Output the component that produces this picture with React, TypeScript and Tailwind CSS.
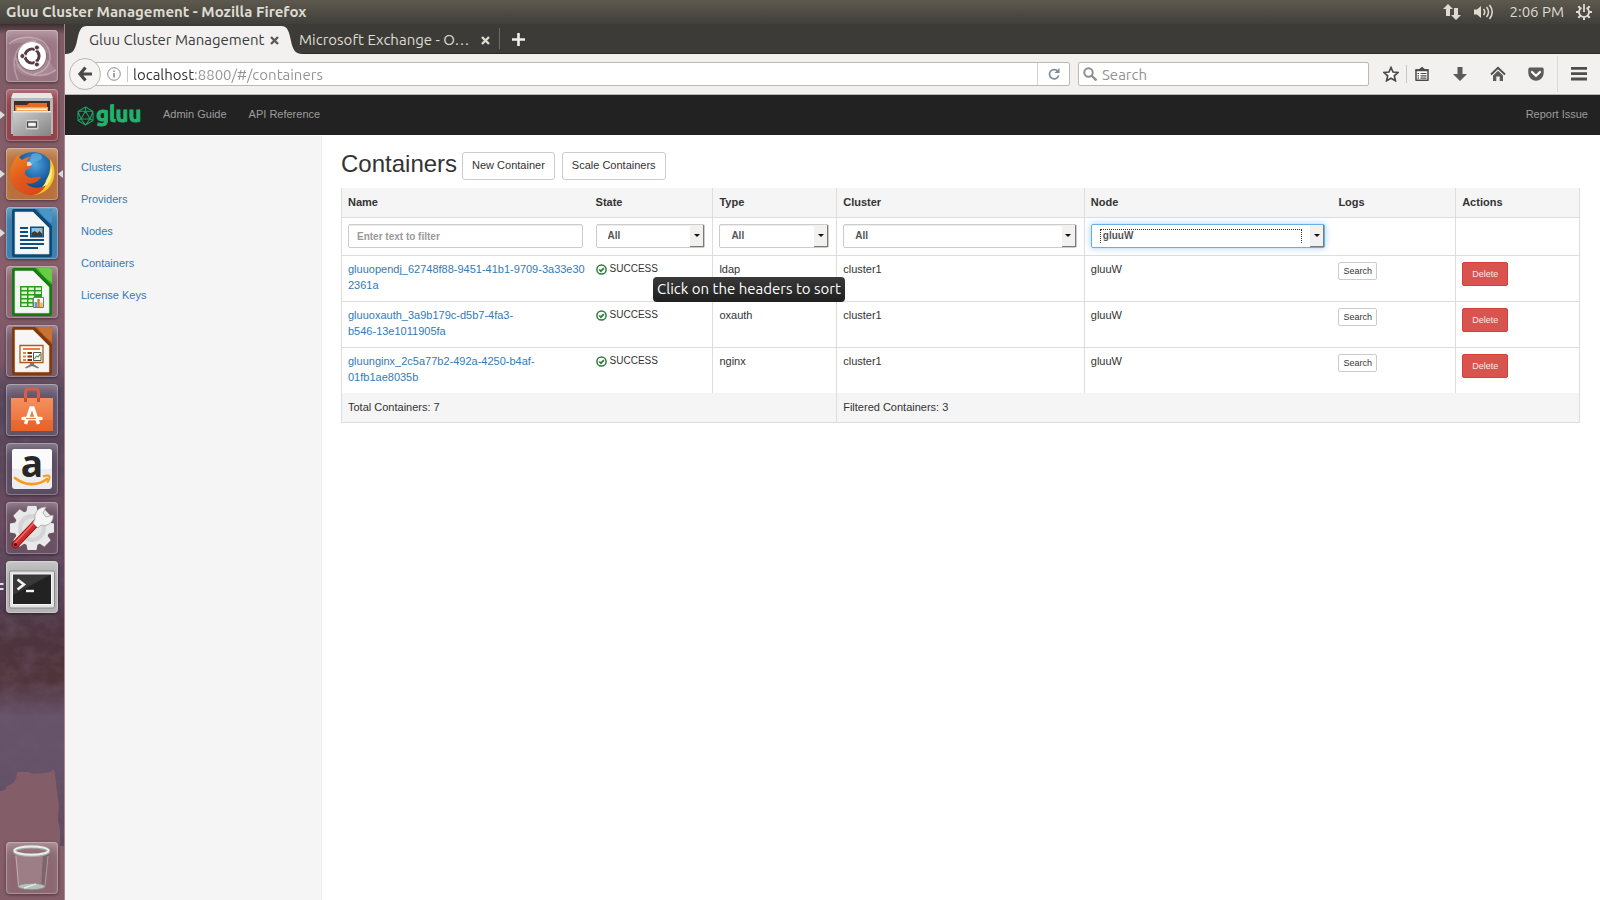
import { useState } from "react";
import type { ReactNode } from "react";

const UI_FONT = "font-['Ubuntu','Noto_Sans',sans-serif]";

/* ---------- Launcher drawings (52 x 52 grid) ---------- */

function DocumentIcon({ dark, mid, fold, children }: { dark: string; mid: string; fold: string; children: ReactNode }) {
  return (
    <>
      <path d="M8 2h36a2 2 0 0 1 2 2v44a2 2 0 0 1-2 2H8a2 2 0 0 1-2-2V4a2 2 0 0 1 2-2z" fill={dark} />
      <path d="M29 2h15a2 2 0 0 1 2 2v15z" fill={fold} />
      <path d="M32 2c3 6 8 11 14 14V4a2 2 0 0 0-2-2z" fill={mid} opacity=".55" />
      <path d="M9 5h18l16 16v26H9z" fill="#f6f6f6" stroke="#dcdcdc" strokeWidth=".6" />
      {children}
    </>
  );
}

const drawings: Record<string, ReactNode> = {
  dash: (
    <>
      <g fill="none" stroke="#fff" strokeOpacity=".28" strokeWidth="1.600">
        <path d="M3 14C11 5 36 3 43 20c4 14-4 22-15 24" />
        <path d="M12 50C4 32 8 12 30 11" />
        <path d="M50 40C36 50 12 46 10 28" />
      </g>
      <path d="M3 14C13 3 38 5 43 24L26 12zM8 34c4 14 24 16 42 6L42 30z" fill="#fff" opacity=".13" />
      <circle cx="26" cy="26.500" r="14.500" fill="#000" opacity=".2" />
      <circle cx="26" cy="26" r="14" fill="#fff" />
      <circle cx="26" cy="26" r="7" fill="none" stroke="#5a3c49" strokeWidth="3.200" />
      <g stroke="#fff" strokeWidth="1.300">
        <path d="M26 26H15.500M26 26 31.500 16.500M26 26 31.500 35.500" />
      </g>
      <circle cx="26" cy="26" r="5.400" fill="#fff" />
      <g fill="#5a3c49" stroke="#fff" strokeWidth=".9">
        <circle cx="16.400" cy="26" r="2.500" />
        <circle cx="30.900" cy="17.500" r="2.500" />
        <circle cx="30.900" cy="34.500" r="2.500" />
      </g>
    </>
  ),
  files: (
    <>
      <path d="M7 4h38l2 7v34H5V11z" fill="#b9b9b9" />
      <path d="M7 4h38l2 5H5z" fill="#e6e6e6" />
      <rect x="8" y="12" width="36" height="13" fill="#3a2f2b" />
      <path d="M9 16h12l2-2h18v8H9z" fill="#e56c1d" />
      <path d="M10 18h32v5H10z" fill="#f6a35a" />
      <path d="M11 19.500h30v1.500H11z" fill="#fff3e4" />
      <path d="M7 22h38v25H7z" fill="url(#steel)" />
      <path d="M7 22h38v1.500H7z" fill="#e9e9e9" />
      <rect x="19.500" y="30.500" width="13" height="10" rx="2" fill="#d9d9d9" stroke="#b4b4b4" />
      <rect x="21.500" y="33" width="9" height="5" fill="#f4f4f4" stroke="#444" strokeWidth="1.400" />
    </>
  ),
  firefox: (
    <>
      <circle cx="27" cy="25" r="21" fill="url(#globe)" />
      <path d="M26 6c6-2 11 1 10 4s-6 2-8 5-4 2-5-1z" fill="#6db9ea" opacity=".6" />
      <path d="M44 11c5 6 6 16 2 24-4 8-12 12-20 12 8-4 13-8 14-15 3-4 5-10 4-21z" fill="#f7c52c" />
      <path d="M45 18c2 6 1 14-4 19s-9 8-14 9c7-5 13-9 15-17 2-3 3-7 3-11z" fill="#fdf08a" />
      <path d="M8 13c1-3 3-5 5-6 0 2 1 4 3 5 3-2 6-3 9-3-2 1-4 3-4 5 0 2 3 2 5 3-1 3-4 4-6 5-2 2-1 5 2 7 4 2 8-1 13 0-3 5-9 8-15 6 5 6 14 6 20 2-4 8-11 11-17 10C12 46 4 37 4 27c0-6 2-10 4-14z" fill="url(#fox)" />
      <path d="M21 14c2-1 4 0 5 3-2 1-4 1-5 1z" fill="#fbd9bd" />
    </>
  ),
  writer: (
    <DocumentIcon dark="#0b4a78" mid="#5da7d6" fold="#2f7fb4">
      <g fill="#0f4f80">
        <path d="M14 20h8v2h-8zM14 24h8v2h-8zM14 28h8v2h-8zM14 32h24v2H14zM14 36h24v2H14zM14 40h18v2H14z" />
        <path d="M24 19.500h14v11H24z" />
      </g>
      <path d="M25.500 21h11v8h-11z" fill="#86c5ea" />
      <path d="M25.500 29v-3l3-2 3 2 2-2 3 3v2z" fill="#3d3d38" />
      <circle cx="34.500" cy="22.500" r="1.300" fill="#f4a03a" />
    </DocumentIcon>
  ),
  calc: (
    <DocumentIcon dark="#187b12" mid="#8ce05a" fold="#3fb52c">
      <path d="M14 20h22v21H14z" fill="#2f9a22" />
      <path
        d="M15.500 21.500h5.500v2.500h-5.500zM22.500 21.500h5.500v2.500h-5.500zM29.500 21.500H35v2.500h-5.500zM15.500 25.500h5.500V28h-5.500zM22.500 25.500h5.500V28h-5.500zM29.500 25.500H35V28h-5.500zM15.500 29.500h5.500V32h-5.500zM22.500 29.500h5.500V32h-5.500zM15.500 33.500h5.500V36h-5.500zM22.500 33.500h4V36h-4zM15.500 37.500h5.500V40h-5.500zM22.500 37.500h4V40h-4z"
        fill="#dff6d3"
      />
      <path d="M27.500 31.500h10v10h-10z" fill="#fff" stroke="#7a7a7a" />
      <path d="M28.500 36h2.500v5h-2.500z" fill="#4aa0e0" />
      <path d="M31.300 33h2.500v8h-2.500z" fill="#e8742a" />
      <path d="M34.200 36.500h2.500V41h-2.500z" fill="#f1b73c" />
    </DocumentIcon>
  ),
  impress: (
    <DocumentIcon dark="#823a08" mid="#d6803b" fold="#b8622a">
      <path d="M14 20.500h23v17H14z" fill="#fff" stroke="#b5561c" strokeWidth="1.300" />
      <path d="M17 23h17v2H17z" fill="#e08440" />
      <path d="M17 27h3v2h-3zM17 30.500h3v2h-3zM17 34h3v2h-3z" fill="#e08440" />
      <path d="M21.500 27H26v2h-4.500zM21.500 30.500H26v2h-4.500zM21.500 34H26v2h-4.500z" fill="#7c3410" />
      <path d="M27.500 27.500h7.500v8h-7.500z" fill="#fff" stroke="#555" />
      <path d="m28.500 34 2-3 1.500 1 2.500-3" stroke="#3fa435" strokeWidth="1.200" fill="none" />
      <path d="M24 38h4v1.500l5 3-1 1-6-2.500-6 2.500-1-1 5-3z" fill="#777" />
    </DocumentIcon>
  ),
  software: (
    <>
      <path d="M19.500 18V8q0-3 3-3h7q3 0 3 3v10" fill="none" stroke="#d0604a" strokeWidth="3" />
      <path d="M5 14h42v33H5z" fill="url(#bag)" />
      <path d="M5 36h42v11H5z" fill="#d9531a" opacity=".3" />
      <path d="M18 14h3v4h-3zM31 14h3v4h-3z" fill="#c4502f" />
      <g fill="none" stroke="#fff" strokeWidth="3.400">
        <path d="m19.500 40 5.500-16h2l5.500 16" />
        <path d="M17 34.500h18" strokeLinecap="round" />
      </g>
      <path d="M20 34.500h10" stroke="#f07a45" strokeWidth="1" />
    </>
  ),
  amazon: (
    <>
      <rect x="6" y="6" width="40" height="40" rx="3" fill="#ededed" />
      <rect x="6" y="6" width="40" height="20" rx="3" fill="#fafafa" />
      <text x="26" y="34" textAnchor="middle" fontFamily="Open Sans, sans-serif" fontWeight="700" fontSize="37" fill="#262626">a</text>
      <path d="M9 35c10 8 23 8 32 1" fill="none" stroke="#f79a1e" strokeWidth="2.600" strokeLinecap="round" />
      <path d="M37 33.500c3-1 6-1 6.500 0s-.5 4-2.500 6" fill="none" stroke="#f79a1e" strokeWidth="2" />
    </>
  ),
  settings: (
    <>
      <g fill="#e9e9e9">
        <circle cx="26" cy="26" r="17.500" />
        {[0, 45, 90, 135, 180, 225, 270, 315].map((a) => (
          <path key={a} d="M21.500 4h9l1.500 8H20z" transform={`rotate(${a} 26 26)`} />
        ))}
      </g>
      <circle cx="26" cy="26" r="14" fill="#d4d4d4" />
      <circle cx="26" cy="26" r="10" fill="#e2e2e2" />
      <path d="M9.500 42.500 32 19" stroke="#8d1414" strokeWidth="7.500" strokeLinecap="round" />
      <path d="M9.500 42.500 32 18.500" stroke="#d42c2c" strokeWidth="5.500" strokeLinecap="round" />
      <path d="M9 41 30 18.500" stroke="#f06a62" strokeWidth="1.500" strokeLinecap="round" />
      <circle cx="9.500" cy="42.500" r="1.600" fill="#5c0a0a" />
      <path d="M29 17c-1-7 4-12 11-12l-3 6 3 4 7-2c1 7-5 12-12 10l-3 3-5-5z" fill="#f5f5f5" stroke="#a5a5a5" strokeWidth=".8" />
    </>
  ),
  terminal: (
    <>
      <rect x="3.500" y="10" width="45" height="37" rx="1.500" fill="#e2e2e2" stroke="#8a8a8a" />
      <rect x="6" y="12.500" width="40" height="31.500" fill="#f5f5f5" />
      <rect x="7" y="13.500" width="38" height="29.500" fill="#222" />
      <path d="M7 13.500h38L7 34z" fill="#fff" opacity=".1" />
      <path d="m11.500 18.500 6.500 5-6.500 5" fill="none" stroke="#f2f2f2" strokeWidth="2.600" />
      <path d="M20 30h8" stroke="#f2f2f2" strokeWidth="2.400" />
    </>
  ),
  trash: (
    <>
      <path d="M9 12h34l-4 33H12z" fill="#fff" opacity=".14" />
      <path d="M37 12h6l-4 33h-4z" fill="#3a2a30" opacity=".3" />
      <path d="M10 14 12.500 44M42 14 39 44" stroke="#fff" strokeOpacity=".35" strokeWidth="1" />
      <ellipse cx="25.500" cy="44.500" rx="13.500" ry="3.200" fill="#b9c0bb" stroke="#7f8783" strokeWidth=".8" />
      <path d="M18 46 30 42" stroke="#dfe5e0" strokeWidth="1.500" />
      <ellipse cx="25.500" cy="9" rx="17" ry="4.300" fill="none" stroke="#a6aca8" strokeWidth="3.600" />
      <ellipse cx="25.500" cy="8.600" rx="17" ry="4.200" fill="none" stroke="#eceeec" strokeWidth="2" />
    </>
  ),
};

type LauncherItem = { id: string; label: string; tile: string; mark?: "one" | "two"; focused?: boolean };

const launcher: LauncherItem[] = [
  { id: "dash", label: "Search your computer", tile: "bg-[#9b7784]" },
  { id: "files", label: "Files", tile: "bg-[#93404a]", mark: "one" },
  { id: "firefox", label: "Firefox Web Browser", tile: "bg-[#b8713c]", mark: "one", focused: true },
  { id: "writer", label: "LibreOffice Writer", tile: "bg-[#3c7fab]", mark: "one" },
  { id: "calc", label: "LibreOffice Calc", tile: "bg-[#8a6873]" },
  { id: "impress", label: "LibreOffice Impress", tile: "bg-[#765a6a]" },
  { id: "software", label: "Ubuntu Software", tile: "bg-[#63536a]" },
  { id: "amazon", label: "Amazon", tile: "bg-[#5b4c62]" },
  { id: "settings", label: "System Settings", tile: "bg-[#695063]" },
  { id: "terminal", label: "Terminal", tile: "bg-[#b3b3b3]", mark: "two" },
];

function Tile({ item }: { item: LauncherItem }) {
  return (
    <div className="relative flex justify-center">
      {item.mark === "one" && (
        <svg className="absolute top-5 left-0" width="5" height="12" viewBox="0 0 5 12" aria-hidden="true">
          <path d="M0 2v8l5-4z" fill="#ddd" />
        </svg>
      )}
      {item.mark === "two" && (
        <svg className="absolute top-5 left-0" width="5" height="12" viewBox="0 0 5 12" aria-hidden="true">
          <path d="M0 2h3l1 1-1 1H0zM0 7h3l1 1-1 1H0z" fill="#ddd" />
        </svg>
      )}
      {item.focused && (
        <svg className="absolute top-5 right-0" width="5" height="12" viewBox="0 0 5 12" aria-hidden="true">
          <path d="M5 2v8L0 6z" fill="#ddd" />
        </svg>
      )}
      <button
        type="button"
        aria-label={item.label}
        className={`h-[52px] w-[52px] rounded-[4px] shadow-[0_1px_3px_rgba(0,0,0,0.45),inset_0_0_0_1px_rgba(255,255,255,0.28),inset_0_10px_12px_-6px_rgba(255,255,255,0.35)] ${item.tile}`}
      >
        <svg width="52" height="52" viewBox="0 0 52 52" className="overflow-visible" aria-hidden="true">
          {drawings[item.id]}
        </svg>
      </button>
    </div>
  );
}

function Launcher() {
  return (
    <aside className="relative w-[65px] shrink-0 border-r border-[#a9828d]">
      <svg className="absolute inset-0 h-full w-full" viewBox="0 0 64 876" preserveAspectRatio="none" aria-hidden="true">
        <defs>
          <linearGradient id="wall" x1="0" y1="0" x2="0" y2="1">
            <stop offset="0" stopColor="#3d2c31" />
            <stop offset=".012" stopColor="#7f5c66" />
            <stop offset=".3" stopColor="#885e6b" />
            <stop offset=".385" stopColor="#7a5667" />
            <stop offset=".42" stopColor="#57475d" />
            <stop offset=".5" stopColor="#5a465a" />
            <stop offset=".56" stopColor="#6b4a5f" />
            <stop offset=".64" stopColor="#54425a" />
            <stop offset=".7" stopColor="#4d343d" />
            <stop offset=".75" stopColor="#50343b" />
            <stop offset=".79" stopColor="#66536a" />
            <stop offset=".85" stopColor="#645269" />
            <stop offset="1" stopColor="#5b4450" />
          </linearGradient>
          <linearGradient id="steel" x1="0" y1="0" x2="1" y2="1">
            <stop offset="0" stopColor="#cfcfcf" />
            <stop offset="1" stopColor="#838383" />
          </linearGradient>
          <radialGradient id="globe" cx=".55" cy=".3" r=".8">
            <stop offset="0" stopColor="#4aa3e0" />
            <stop offset=".5" stopColor="#1a5b9e" />
            <stop offset="1" stopColor="#10305e" />
          </radialGradient>
          <linearGradient id="fox" x1="0" y1="0" x2=".6" y2="1">
            <stop offset="0" stopColor="#f08a24" />
            <stop offset=".5" stopColor="#e35d1c" />
            <stop offset="1" stopColor="#d8491c" />
          </linearGradient>
          <linearGradient id="bag" x1="0" y1="0" x2="0" y2="1">
            <stop offset="0" stopColor="#f4905d" />
            <stop offset="1" stopColor="#ec6a32" />
          </linearGradient>
          <filter id="rock" x="0" y="0" width="1" height="1">
            <feTurbulence type="fractalNoise" baseFrequency=".05 .07" numOctaves="4" seed="8" />
            <feColorMatrix values="0 0 0 0 .16  0 0 0 0 .1  0 0 0 0 .14  1.8 0 0 0 -.7" />
          </filter>
        </defs>
        <rect width="64" height="876" fill="url(#wall)" />
        <rect y="350" width="64" height="500" filter="url(#rock)" opacity=".5" />
        <path d="M0 767 5 766 7 762 12 760 16 755 17 748 28 748 34 750 44 749 50 748 54 745 56 757 57 768 59 780 58 796 60 806 60 822 64 822V876H0z" fill="#835d67" />
      </svg>
      <nav aria-label="Launcher" className="relative flex h-full flex-col gap-[7px] py-[6px] pr-[1px]">
        {launcher.map((item) => (
          <Tile key={item.id} item={item} />
        ))}
        <div className="mt-auto">
          <Tile item={{ id: "trash", label: "Trash", tile: "bg-[#8d6873]" }} />
        </div>
      </nav>
    </aside>
  );
}

/* ---------- System bar ---------- */

function SystemBar() {
  return (
    <header className={`flex h-6 shrink-0 items-center bg-linear-to-b from-[#5d594f] to-[#403f3a] pr-2 pl-[6px] text-[15px] text-[#dfdbd2] ${UI_FONT}`}>
      <h1 className="font-bold">Gluu Cluster Management - Mozilla Firefox</h1>
      <div className="ml-auto flex items-center">
        <button type="button" aria-label="Network" className="mr-[13px]">
          <svg width="18" height="18" viewBox="0 0 18 18" fill="#dfdbd2" aria-hidden="true">
            <path d="M5 1 0 6h3v7h4V6h3zM13 17l5-5h-3V5h-4v7H8z" />
          </svg>
        </button>
        <button type="button" aria-label="Sound" className="mr-[15px]">
          <svg width="20" height="18" viewBox="0 0 20 18" fill="none" stroke="#dfdbd2" strokeWidth="1.500" aria-hidden="true">
            <path d="M0 6.500h3L7 3v12l-4-3.500H0z" fill="#dfdbd2" stroke="none" />
            <path d="M9.500 6q2.500 3 0 6M12.500 4q4 5 0 10M15.500 2q5.500 7 0 14" />
          </svg>
        </button>
        <time className="mr-3">2:06 PM</time>
        <button type="button" aria-label="Session">
          <svg width="16" height="16" viewBox="0 0 16 16" fill="none" stroke="#dfdbd2" aria-hidden="true">
            <path d="M5.500 3.700a5 5 0 1 0 5 0" strokeWidth="1.800" />
            <path d="M8 0v8" strokeWidth="1.800" />
            <path d="M2.300 2.300 4.300 4.300M13.700 2.300l-2 2M0 8h3M13 8h3M2.300 13.700l2-2M13.700 13.700l-2-2M8 13v3" strokeWidth="2" />
          </svg>
        </button>
      </div>
    </header>
  );
}

/* ---------- Browser chrome ---------- */

function CloseMark({ color }: { color: string }) {
  return (
    <svg width="9" height="9" viewBox="0 0 9 9" stroke={color} strokeWidth="2.400" aria-hidden="true">
      <path d="m1 1 7 7M8 1 1 8" />
    </svg>
  );
}

function TabStrip() {
  return (
    <div className={`flex h-[30px] shrink-0 items-end border-b border-[#2b2a27] bg-[#3c3b37] text-[15px] ${UI_FONT}`}>
      <div className="-mb-px flex h-7">
        <svg width="22" height="28" viewBox="0 0 22 28" fill="#f2f1f0" aria-hidden="true">
          <path d="M0 28c8 0 10-4 12-13S15 0 22 0v28z" />
        </svg>
        <div className="flex w-[194px] items-center justify-between bg-[#f2f1f0] px-[2px] text-[#3c3c3c]">
          <span className="whitespace-nowrap">Gluu Cluster Management</span>
          <button type="button" aria-label="Close Gluu Cluster Management">
            <CloseMark color="#5a5a5a" />
          </button>
        </div>
        <svg width="22" height="28" viewBox="0 0 22 28" fill="#f2f1f0" aria-hidden="true">
          <path d="M22 28c-8 0-10-4-12-13S7 0 0 0v28z" />
        </svg>
      </div>
      <div className="-mb-px -ml-1 flex h-7 w-[200px] items-center text-[#dfdbd2]">
        <span className="w-[170px] whitespace-nowrap">Microsoft Exchange - O…</span>
        <button type="button" aria-label="Close Microsoft Exchange" className="ml-3">
          <CloseMark color="#dfdbd2" />
        </button>
      </div>
      <div className="mb-1 h-[21px] w-px bg-[#6c6b67]" />
      <button type="button" aria-label="New tab" className="mb-[7px] ml-3">
        <svg width="13" height="13" viewBox="0 0 13 13" stroke="#f0efec" strokeWidth="2.600" aria-hidden="true">
          <path d="M6.500 0v13M0 6.500h13" />
        </svg>
      </button>
    </div>
  );
}

function ToolButton({ label, width, children }: { label: string; width: string; children: ReactNode }) {
  return (
    <button type="button" aria-label={label} className={`flex h-8 shrink-0 items-center justify-center ${width}`}>
      <svg width="16" height="16" viewBox="0 0 16 16" aria-hidden="true">
        {children}
      </svg>
    </button>
  );
}

function Toolbar() {
  const [url, setUrl] = useState("localhost:8800/#/containers");
  return (
    <div className={`flex h-[41px] shrink-0 items-center border-b border-[#b6b5b2] bg-[#f2f1f0] pl-1 text-[15px] ${UI_FONT}`}>
      <button type="button" aria-label="Back" className="z-10 flex h-8 w-8 shrink-0 items-center justify-center rounded-full border border-[#b9b6b1] bg-[#f5f4f3]">
        <svg width="16" height="16" viewBox="0 0 16 16" fill="none" stroke="#4a4a4a" strokeWidth="3.200" aria-hidden="true">
          <path d="M8.500 1.500 3 8l5.500 6.500M3 8h12" />
        </svg>
      </button>
      <div className="-ml-4 flex h-6 min-w-0 flex-1 items-center rounded-r-[2px] border border-[#bab8b4] bg-white pl-[21px]">
        <svg width="14" height="14" viewBox="0 0 14 14" fill="none" stroke="#8a8a8a" className="shrink-0" aria-hidden="true">
          <circle cx="7" cy="7" r="6.300" />
          <path d="M7 6v4.500M7 3.400V5" strokeWidth="1.600" />
        </svg>
        <span className="mr-[5px] ml-[6px] h-4 w-px bg-[#c8c8c8]" />
        <input
          aria-label="Address"
          value={url}
          onChange={(e) => setUrl(e.target.value)}
          className="min-w-0 flex-1 bg-[linear-gradient(90deg,#2e2e2e_62px,#929292_62px)] bg-clip-text pt-[2px] text-transparent outline-none"
        />
        <button type="button" aria-label="Reload" className="flex h-full w-8 items-center justify-center border-l border-[#d5d3d0]">
          <svg width="12" height="12" viewBox="0 0 13 13" fill="none" stroke="#7d8ea0" strokeWidth="1.800" aria-hidden="true">
            <path d="M10.500 3.500A5 5 0 1 0 11.500 8" />
            <path d="M12.500 0v5.500H7z" fill="#7d8ea0" stroke="none" />
          </svg>
        </button>
      </div>
      <div className="ml-2 flex h-6 w-[291px] shrink-0 items-center rounded-[2px] border border-[#bab8b4] bg-white pl-1">
        <svg width="14" height="14" viewBox="0 0 14 14" fill="none" stroke="#8f8f8f" strokeWidth="2" aria-hidden="true">
          <circle cx="5.500" cy="5.500" r="4.200" />
          <path d="m8.500 8.500 5 5" strokeWidth="2.400" />
        </svg>
        <input aria-label="Search the web" placeholder="Search" className="ml-[5px] min-w-0 flex-1 pt-[2px] outline-none placeholder:text-[#929292]" />
      </div>
      <div className="ml-[7px] flex items-center">
        <ToolButton label="Bookmark this page" width="w-[30px]">
          <path d="m8 1.500 2 4.500 5 .5-3.700 3.300 1.100 4.900L8 12.200l-4.400 2.500 1.100-4.900L1 6.500 6 6z" fill="#fff" stroke="#4a4a4a" strokeWidth="1.700" />
        </ToolButton>
        <span className="h-[18px] w-px bg-[#c9c7c4]" />
        <ToolButton label="Bookmarks" width="w-[30px] mr-1">
          <path d="M2 4h12v10.300H2z" fill="#fff" stroke="#4a4a4a" strokeWidth="1.500" strokeLinejoin="round" />
          <path d="M1.500 3.200h3.500L8 .8l3 2.400h3.500v2h-13z" fill="#4a4a4a" />
          <path d="M6.500 7.500h6M6.500 9.800h6M6.500 12.100h6" stroke="#4a4a4a" strokeWidth="1.200" />
          <path d="M3.500 7.500H5M3.500 9.800H5M3.500 12.100H5" stroke="#4a4a4a" strokeWidth="1.200" />
        </ToolButton>
        <ToolButton label="Downloads" width="w-[38px]">
          <path d="M5.500 1h5v7h4.500L8 15 1 8h4.500z" fill="#5b5b5b" />
        </ToolButton>
        <ToolButton label="Home" width="w-[38px]">
          <path d="M1 8.500 8 1.800l7 6.700" fill="none" stroke="#4d4d4d" strokeWidth="1.900" />
          <path d="M3 9.500l5-4.700 5 4.700V15H9.700v-4.500H6.300V15H3z" fill="#5b5b5b" />
        </ToolButton>
        <ToolButton label="Save to Pocket" width="w-[38px]">
          <path d="M1.800 1.500h12.400a1.500 1.500 0 0 1 1.500 1.500v4a7.700 7.700 0 0 1-15.400 0V3a1.500 1.500 0 0 1 1.500-1.500z" fill="#5b5b5b" />
          <path d="m4 6 4 3.800L12 6" fill="none" stroke="#fff" strokeWidth="2.200" strokeLinecap="round" />
        </ToolButton>
        <span className="ml-[2px] h-9 w-px bg-[#dbd9d6]" />
        <ToolButton label="Menu" width="w-[42px]">
          <path d="M0 1h16v2.800H0zM0 6.300h16v2.800H0zM0 11.600h16v2.800H0z" fill="#4d4d4d" />
        </ToolButton>
      </div>
    </div>
  );
}

/* ---------- Page ---------- */

function Navbar() {
  return (
    <header className="flex h-10 shrink-0 items-center bg-[#222] px-3 pb-[2px] text-[11px] text-[#9d9d9d]">
      <a href="#/" className="flex h-full w-16 items-center text-[#1fb36b]">
        <svg width="17" height="20" viewBox="0 0 17 20" fill="none" stroke="#1a9d61" strokeWidth="1.100" strokeLinejoin="round" className="mt-[3px] shrink-0" aria-hidden="true">
          <path d="M8.500 1 16 5.500v9L8.500 19 1 14.500v-9zM8.500 5 13 13H4zM8.500 1v4M1 5.500l7.500-.5 7.500.5M1 5.500 4 13l-3 1.500M16 5.500 13 13l3 1.500M4 13l4.500 6 4.500-6" />
        </svg>
        <span className={`ml-[2px] pb-[1px] text-[22px] leading-none font-bold [-webkit-text-stroke:1px_#1fb36b] ${UI_FONT}`}>gluu</span>
      </a>
      <nav className="ml-[22px] flex gap-[22px]">
        <a href="#/guide">Admin Guide</a>
        <a href="#/api">API Reference</a>
      </nav>
      <a href="#/issue" className="ml-auto">Report Issue</a>
    </header>
  );
}

const sections = ["Clusters", "Providers", "Nodes", "Containers", "License Keys"];

function FilterSelect({ label, options, initial, dotted }: { label: string; options: string[]; initial: string; dotted?: boolean }) {
  const [value, setValue] = useState(initial);
  return (
    <div className="relative">
      <select
        aria-label={label}
        value={value}
        onChange={(e) => setValue(e.target.value)}
        className={`block h-6 w-full appearance-none rounded-[2px] border bg-white pt-px pl-[11px] text-[10px] font-bold text-[#555] outline-none ${
          dotted ? "border-[#66afe9] shadow-[0_0_7px_rgba(102,175,233,0.6)]" : "border-[#ccc] shadow-[inset_0_1px_1px_rgba(0,0,0,0.075)]"
        }`}
      >
        {options.map((o) => (
          <option key={o}>{o}</option>
        ))}
      </select>
      {dotted && <span className="pointer-events-none absolute inset-y-[5px] right-[23px] left-[9px] border-x border-t border-dotted border-[#333]" />}
      <span className="pointer-events-none absolute inset-y-px right-px flex w-[14px] items-center justify-center border-r border-b border-[#7d7b78] bg-[#f2f1f0]">
        <svg width="6" height="3" viewBox="0 0 6 3" aria-hidden="true">
          <path d="M0 0h6L3 3z" fill="#111" />
        </svg>
      </span>
    </div>
  );
}

type Row = { name: [string, string]; type: string };

const rows: Row[] = [
  { name: ["gluuopendj_62748f88-9451-41b1-9709-3a33e30", "2361a"], type: "ldap" },
  { name: ["gluuoxauth_3a9b179c-d5b7-4fa3-", "b546-13e1011905fa"], type: "oxauth" },
  { name: ["gluunginx_2c5a77b2-492a-4250-b4af-", "01fb1ae8035b"], type: "nginx" },
];

const HEAD = "h-[30px] border-b border-[#ddd] bg-[#f5f5f5] pr-[7px] pb-[2px] pl-[6px] text-left";
const FILTER = "h-[38px] border-b border-[#ddd] pr-[7px] pb-[2px] pl-[6px]";
const CELL = "h-[46px] border-b border-[#ddd] pr-[7px] pl-[6px] pt-[5px] align-top group-last:h-[45px] group-last:border-b-0";
const RIGHT = "border-r border-[#ddd]";

function ContainersTable() {
  return (
    <table className="mt-2 w-full table-fixed border-separate border-spacing-0 border-l border-[#ddd] leading-4">
      <colgroup>
        <col className="w-[20%]" />
        <col className="w-[10%]" />
        <col className="w-[10%]" />
        <col className="w-[20%]" />
        <col className="w-[20%]" />
        <col className="w-[10%]" />
        <col className="w-[10%]" />
      </colgroup>
      <thead>
        <tr>
          <th className={HEAD}>Name</th>
          <th className={`${HEAD} ${RIGHT}`}>State</th>
          <th className={`${HEAD} ${RIGHT}`}>Type</th>
          <th className={`${HEAD} ${RIGHT}`}>Cluster</th>
          <th className={HEAD}>Node</th>
          <th className={`${HEAD} ${RIGHT}`}>Logs</th>
          <th className={`${HEAD} ${RIGHT}`}>Actions</th>
        </tr>
        <tr>
          <td className={FILTER}>
            <input
              aria-label="Filter by name"
              placeholder="Enter text to filter"
              className="block h-6 w-full rounded-[2px] border border-[#ccc] px-2 pt-px text-[10px] font-bold shadow-[inset_0_1px_1px_rgba(0,0,0,0.075)] outline-none placeholder:text-[#999]"
            />
          </td>
          <td className={`${FILTER} ${RIGHT}`}>
            <FilterSelect label="Filter by state" options={["All", "SUCCESS"]} initial="All" />
          </td>
          <td className={`${FILTER} ${RIGHT}`}>
            <FilterSelect label="Filter by type" options={["All", "ldap", "oxauth", "nginx"]} initial="All" />
          </td>
          <td className={`${FILTER} ${RIGHT}`}>
            <FilterSelect label="Filter by cluster" options={["All", "cluster1"]} initial="All" />
          </td>
          <td className={FILTER}>
            <FilterSelect label="Filter by node" options={["All", "gluuW"]} initial="gluuW" dotted />
          </td>
          <td className={`${FILTER} ${RIGHT}`} />
          <td className={`${FILTER} ${RIGHT}`} />
        </tr>
      </thead>
      <tbody>
        {rows.map((row) => (
          <tr key={row.type} className="group">
            <td className={CELL}>
              <a href={`#/containers/${row.type}`} className="whitespace-nowrap text-[#337ab7]">
                {row.name[0]}
                <br />
                {row.name[1]}
              </a>
            </td>
            <td className={`${CELL} ${RIGHT}`}>
              <span className="flex h-4 items-center gap-[3px] text-[10px]">
                <svg width="11" height="11" viewBox="0 0 11 11" fill="none" stroke="#2f7d3b" aria-hidden="true">
                  <circle cx="5.500" cy="5.500" r="4.600" strokeWidth="1.500" />
                  <path d="m3.200 5.500 1.700 1.700 3-3" strokeWidth="1.700" />
                </svg>
                SUCCESS
              </span>
            </td>
            <td className={`${CELL} ${RIGHT}`}>{row.type}</td>
            <td className={`${CELL} ${RIGHT}`}>cluster1</td>
            <td className={CELL}>gluuW</td>
            <td className={`${CELL} ${RIGHT}`}>
              <button type="button" className="mt-px flex h-[18px] items-center rounded-[2px] border border-[#ccc] bg-white px-1 text-[9px]">
                Search
              </button>
            </td>
            <td className={`${CELL} ${RIGHT}`}>
              <button type="button" className="mt-px flex h-6 items-center rounded-[2px] border border-[#d43f3a] bg-[#d9534f] px-[9px] text-[9px] text-[#fbe9e8]">
                Delete
              </button>
            </td>
          </tr>
        ))}
      </tbody>
      <tfoot>
        <tr>
          <td colSpan={3} className={`${HEAD} ${RIGHT}`}>Total Containers: 7</td>
          <td colSpan={4} className={`${HEAD} ${RIGHT}`}>Filtered Containers: 3</td>
        </tr>
      </tfoot>
    </table>
  );
}

const OUTLINE_BUTTON = "h-7 rounded-[3px] border border-[#ccc] bg-white px-[9px] pb-[2px] text-[11px]";

export default function App() {
  return (
    <div className="flex min-h-screen flex-col bg-white font-['Liberation_Sans',Arial,sans-serif] text-[11px] text-[#333]">
      <SystemBar />
      <div className="flex min-w-0 flex-1">
        <Launcher />
        <div className="flex min-w-0 flex-1 flex-col">
          <TabStrip />
          <Toolbar />
          <Navbar />
          <div className="mt-px flex flex-1">
            <nav aria-label="Sections" className="w-[257px] shrink-0 border-r border-[#eee] bg-[#f5f5f5] px-4 pt-[15px]">
              <ul>
                {sections.map((s) => (
                  <li key={s}>
                    <a href="#/section" className="flex h-8 items-center text-[#337ab7]">{s}</a>
                  </li>
                ))}
              </ul>
            </nav>
            <main className="min-w-0 flex-1 pt-4 pr-5 pl-[19px]">
              <div className="flex items-center">
                <h2 className="pb-1 text-[24px] leading-6">Containers</h2>
                <button type="button" className={`ml-[5px] ${OUTLINE_BUTTON}`}>New Container</button>
                <button type="button" className={`ml-[7px] ${OUTLINE_BUTTON}`}>Scale Containers</button>
              </div>
              <div className="relative">
                <ContainersTable />
                <div role="tooltip" className={`absolute top-[89px] left-[312px] flex h-[25px] items-center rounded-[4px] bg-linear-to-b from-[#3a3a3a] to-[#1f1f1f] px-1 text-[15px] whitespace-nowrap text-white ${UI_FONT}`}>
                  Click on the headers to sort
                </div>
              </div>
            </main>
          </div>
        </div>
      </div>
    </div>
  );
}
